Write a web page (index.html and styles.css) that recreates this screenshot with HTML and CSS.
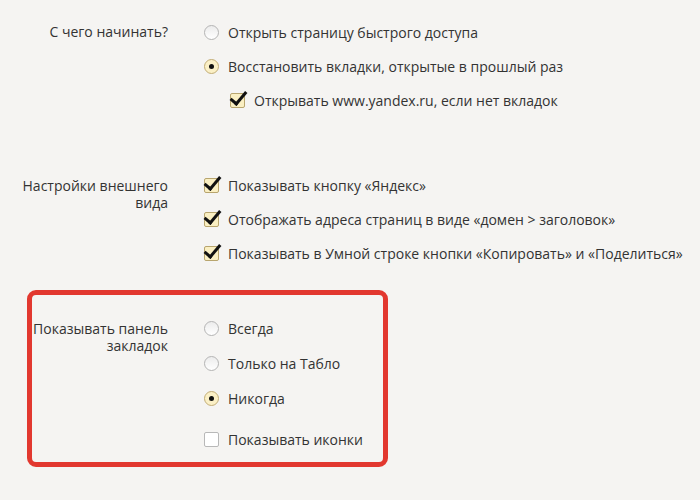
FILE: index.html
```html
<!DOCTYPE html>
<html lang="ru">
<head>
  <meta charset="UTF-8">
  <title>Настройки</title>
  <link rel="stylesheet" href="styles.css">
</head>
<body>
  <div class="page">
    <div class="section first">
      <div class="label one-line">С чего начинать?</div>
      <div class="options">
        <div class="opt"><span class="radio"></span>Открыть страницу быстрого доступа</div>
        <div class="opt"><span class="radio on"></span>Восстановить вкладки, открытые в прошлый раз</div>
        <div class="opt sub"><span class="check on"></span>Открывать www.yandex.ru, если нет вкладок</div>
      </div>
    </div>

    <div class="section look">
      <div class="label two-lines">Настройки внешнего<br>вида</div>
      <div class="options">
        <div class="opt"><span class="check on"></span>Показывать кнопку «Яндекс»</div>
        <div class="opt"><span class="check on"></span>Отображать адреса страниц в виде «домен &gt; заголовок»</div>
        <div class="opt"><span class="check on"></span>Показывать в Умной строке кнопки «Копировать» и «Поделиться»</div>
      </div>
    </div>

    <div class="section marked">
      <div class="label two-lines">Показывать панель<br>закладок</div>
      <div class="options">
        <div class="opt tall"><span class="radio"></span>Всегда</div>
        <div class="opt tall"><span class="radio"></span>Только на Табло</div>
        <div class="opt tall"><span class="radio on"></span>Никогда</div>
        <div class="opt icons"><span class="check"></span>Показывать иконки</div>
      </div>
    </div>
  </div>
</body>
</html>
```

FILE: styles.css
```css
/* settings page */
body {
  margin: 0;
  background-color: #f5f4f2;
  color: #333;
  font-family: "Open Sans", "Noto Sans", sans-serif;
  font-size: 14px;
}
.page {
  padding-top: 15px;
}
.section {
  display: grid;
  grid-template-columns: 168px 1fr;
  column-gap: 36px;
}
.look {
  margin-top: 51px;
}
.marked {
  grid-template-columns: 136px 1fr;
  margin: 20px 0 0 27px;
  padding: 16px 0 6px 0;
  width: 351px;
  border: 5px solid #e2382f;
  border-radius: 9px;
}
.label {
  text-align: right;
  white-space: nowrap;
}
.label.one-line {
  line-height: 34px;
}
.label.two-lines {
  padding-top: 9px;
  line-height: 17px;
}
.opt {
  display: flex;
  align-items: center;
  height: 34px;
  white-space: nowrap;
}
.opt.tall {
  height: 35px;
}
.opt.sub {
  padding-left: 26px;
}
.opt.icons {
  margin-top: 6px;
}
.radio {
  box-sizing: border-box;
  width: 15px;
  height: 15px;
  margin-right: 9px;
  border: 1px solid #b4b4b4;
  border-radius: 50%;
  background: linear-gradient(#ececec, #fff);
  display: flex;
  align-items: center;
  justify-content: center;
  flex-shrink: 0;
}
.radio.on {
  border-color: #c2ad76;
  background: #fbf0c6;
}
.radio.on::after {
  content: "";
  width: 5px;
  height: 5px;
  border-radius: 50%;
  background: #111;
}
.check {
  position: relative;
  box-sizing: border-box;
  width: 15px;
  height: 15px;
  margin-right: 9px;
  border: 1px solid #b8b8b8;
  border-radius: 2px;
  background: #fff;
  flex-shrink: 0;
}
.check.on {
  border-color: #b8a56e;
  background: #faefc2;
}
.check.on::after {
  content: "";
  position: absolute;
  left: 3px;
  top: -6px;
  width: 6px;
  height: 14px;
  border-right: 3px solid #111;
  border-bottom: 3px solid #111;
  transform: rotate(40deg);
}
```
